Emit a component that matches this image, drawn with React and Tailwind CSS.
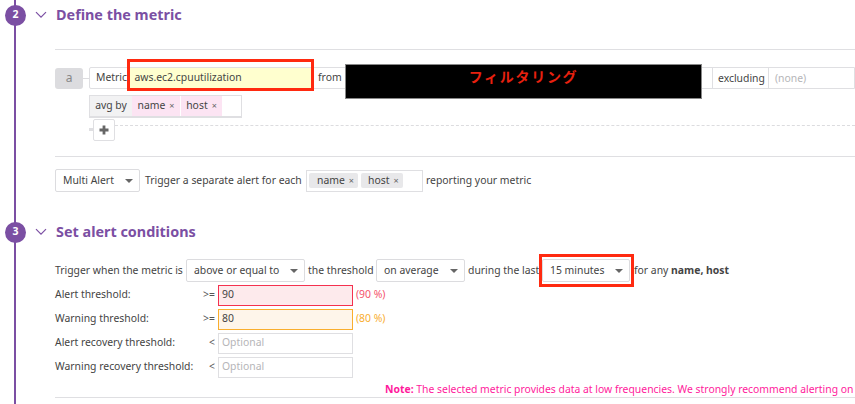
import React from "react";

const Chevron = () => (
  <svg width="12" height="8" viewBox="0 0 12 8" fill="none" className="shrink-0">
    <path d="M1 1.2 L6 6.2 L11 1.2" stroke="#7b4fa3" strokeWidth="1.2" />
  </svg>
);

const Caret = () => (
  <span className="h-0 w-0 border-x-[4px] border-t-[4px] border-x-transparent border-t-[#666]" />
);

const Select = ({ label, className }) => (
  <div
    className={`flex h-[23px] items-center justify-between rounded-[2px] border border-[#dcdcdf] bg-white pl-[7px] pr-[6px] ${className}`}
  >
    <span>{label}</span>
    <Caret />
  </div>
);

const X = () => <span className="ml-[4px] text-[9px] text-[#666]">×</span>;

const Header = ({ title, n, className }) => (
  <div className={`flex items-center ${className}`}>
    <div className="absolute left-[5px] flex h-[21px] w-[21px] items-center justify-center rounded-full bg-[#7b4fa3] text-[10.5px] font-bold text-white">
      {n}
    </div>
    <div className="ml-[35px] flex w-[21px]">
      <Chevron />
    </div>
    <h2 className="text-[14.4px] font-bold text-[#7b4fa3]">{title}</h2>
  </div>
);

const Threshold = ({ label, op, value, note, inputClass, noteClass }) => (
  <div className="flex h-[24px] items-center">
    <span className="w-[147px]">{label}</span>
    <span className="w-[13px] text-right text-[#555]">{op}</span>
    <div
      className={`ml-[3px] flex h-[21px] w-[135px] items-center border pl-[3px] ${inputClass}`}
    >
      {value || <span className="text-[#b5b5b8]">Optional</span>}
    </div>
    {note && <span className={`ml-[3px] ${noteClass}`}>{note}</span>}
  </div>
);

export default function App() {
  return (
    <div className="relative h-[404px] w-[855px] overflow-hidden whitespace-nowrap bg-white font-['Noto_Sans',sans-serif] text-[10.4px] text-[#444]">
      <div className="absolute left-[14px] top-0 h-full w-[2px] bg-[#7b4fa3]" />

      <Header n="2" title="Define the metric" className="h-[30px]" />
      <div className="ml-[55px] mt-[19px] border-t border-[#dfdfe2]">
        <div className="relative pt-[17px]">
          <div className="flex h-[22px] items-center">
            <div className="flex h-[21px] w-[28px] items-center justify-center rounded-[3px] bg-[#dcdcdf] text-[12px] text-[#888]">
              a
            </div>
            <div className="h-px w-[6px] bg-[#dcdcdf]" />
            <div className="flex h-[22px] flex-1 items-center rounded-l-[2px] border border-[#dfdfe2] pl-[6px]">
              <span className="w-[34px]">Metric</span>
              <div className="relative flex h-[21px] w-[181px] items-center border-b border-[#dcdcdf] bg-[#ffffcf] pl-[4.5px]">
                aws.ec2.cpuutilization
                <div className="absolute -bottom-[3px] -left-[3px] -right-[3px] -top-[9px] border-3 border-[#ff2a10]" />
              </div>
              <span className="ml-[7px] w-[27px]">from</span>
              <div className="h-full w-[367px]" />
              <div className="h-full w-[56px] border-l border-[#dfdfe2] pl-[5px] leading-[20px]">excluding</div>
              <div className="h-full border-l border-[#dfdfe2] pl-[6px] leading-[20px] text-[#b5b5b8]">(none)</div>
            </div>
          </div>
          <div className="absolute left-[290px] top-[14px] flex h-[35px] w-[357px] items-center justify-center border border-[#888] bg-black pb-[10px] font-['Noto_Sans_CJK_JP',sans-serif] text-[14px] font-bold tracking-[1.7px] text-[#e8200f]">
            フィルタリング
          </div>

          <div className="ml-[34px] mt-[6px] flex h-[23px] w-[153px] border border-b-2 border-[#dfdfe2]">
            <div className="flex w-[42px] items-center justify-center bg-[#f2f2f3]">avg by</div>
            <div className="flex w-[48px] items-center justify-center bg-[#fce4f3]">name<X /></div>
            <div className="ml-px flex w-[41px] items-center justify-center bg-[#fce4f3]">host<X /></div>
          </div>

          <div className="relative ml-[34px] mt-[1px] h-[23px]">
            <div className="absolute left-0 top-[9px] h-[3px] w-[4px] bg-[#dfdfe2]" />
            <div className="absolute left-[26px] right-0 top-[6px] border-t border-dashed border-[#dcdcdf]" />
            <div className="absolute left-[4px] top-0 flex h-[22px] w-[22px] items-center justify-center rounded-[2px] border border-[#dfdfe2] bg-white">
              <svg width="10" height="10" viewBox="0 0 10 10">
                <path d="M5 0.5 V9.5 M0.5 5 H9.5" stroke="#666" strokeWidth="2.8" />
              </svg>
            </div>
          </div>
        </div>

        <div className="mt-[14px] border-t border-[#dfdfe2] pt-[12px]">
          <div className="flex h-[23px] items-center">
            <Select label="Multi Alert" className="w-[85px]" />
            <span className="ml-[5px] w-[161px]">Trigger a separate alert for each</span>
            <div className="flex h-[22px] w-[117px] items-center gap-[3px] border border-[#dfdfe2] pl-[2px]">
              <span className="flex h-[15px] w-[49px] items-center rounded-[2px] bg-[#e8e8ea] pl-[8px]">name<X /></span>
              <span className="flex h-[15px] w-[42px] items-center rounded-[2px] bg-[#e8e8ea] pl-[7px]">host<X /></span>
            </div>
            <span className="ml-[3px]">reporting your metric</span>
          </div>
        </div>
      </div>

      <div className="relative">
        <Header n="3" title="Set alert conditions" className="mt-[25px] h-[30px]" />
      </div>

      <div className="ml-[55px] mt-[12px]">
        <div className="flex h-[23px] items-center">
          <span className="w-[131px]">Trigger when the metric is</span>
          <Select label="above or equal to" className="w-[119px]" />
          <span className="ml-[3px] w-[68px]">the threshold</span>
          <Select label="on average" className="w-[89px]" />
          <span className="ml-[3px] w-[74px]">during the last</span>
          <div className="relative w-[88px]">
            <Select label="15 minutes" className="w-full" />
            <div className="absolute -bottom-[5px] -left-[3px] -right-[4px] -top-[5px] border-3 border-[#ff2a10]" />
          </div>
          <span className="ml-[4px]">for any <b>name, host</b></span>
        </div>
        <div className="mt-[1px]">
          <Threshold label="Alert threshold:" op=">=" value="90" note="(90 %)" inputClass="border-[#f4314f] bg-[#fdeaec]" noteClass="text-[#f4526b]" />
          <Threshold label="Warning threshold:" op=">=" value="80" note="(80 %)" inputClass="border-[#f9ae2e] bg-[#fef5ea]" noteClass="text-[#f9ae2e]" />
          <Threshold label="Alert recovery threshold:" op="<" inputClass="border-[#dfdfe2]" />
          <Threshold label="Warning recovery threshold:" op="<" inputClass="border-[#dfdfe2]" />
        </div>
        <div className="mt-[3px] pl-[330px] leading-[15px] text-[#ff1a9c]">
          <b>Note:</b> The selected metric provides data at low frequencies. We strongly recommend alerting on
        </div>
        <div className="border-t border-[#dfdfe2]" />
      </div>
    </div>
  );
}
